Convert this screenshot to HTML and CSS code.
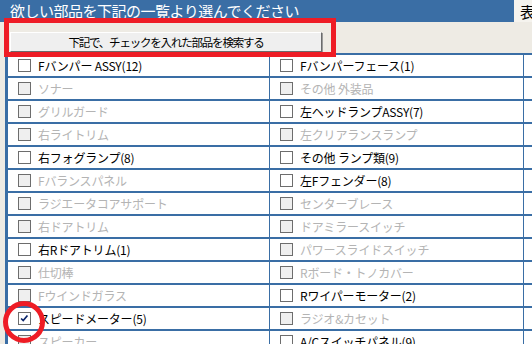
FILE: index.html
```html
<!DOCTYPE html>
<html lang="ja">
<head>
    <meta charset="UTF-8">
    <title>部品検索</title>
    <link rel="stylesheet" href="styles.css">
</head>
<body>
    <div class="header">
        <div class="header-title">欲しい部品を下記の一覧より選んでください</div>
        <div class="header-tab">表示</div>
    </div>

    <div class="toolbar">
        <button class="search-btn">下記で、チェックを入れた部品を検索する</button>
    </div>

    <table class="parts">
        <colgroup>
            <col class="col1">
            <col class="col2">
            <col class="col3">
        </colgroup>
        <tbody>
            <tr>
                <td class="c1"><label class="item"><span class="box"></span>Fバンパー ASSY(12)</label></td>
                <td class="c2"><label class="item"><span class="box"></span>Fバンパーフェース(1)</label></td>
                <td class="c3"></td>
            </tr>
            <tr>
                <td class="c1"><label class="item off"><span class="box"></span>ソナー</label></td>
                <td class="c2"><label class="item off"><span class="box"></span>その他 外装品</label></td>
                <td class="c3"></td>
            </tr>
            <tr>
                <td class="c1"><label class="item off"><span class="box"></span>グリルガード</label></td>
                <td class="c2"><label class="item"><span class="box"></span>左ヘッドランプASSY(7)</label></td>
                <td class="c3"></td>
            </tr>
            <tr>
                <td class="c1"><label class="item off"><span class="box"></span>右ライトリム</label></td>
                <td class="c2"><label class="item off"><span class="box"></span>左クリアランスランプ</label></td>
                <td class="c3"></td>
            </tr>
            <tr>
                <td class="c1"><label class="item"><span class="box"></span>右フォグランプ(8)</label></td>
                <td class="c2"><label class="item"><span class="box"></span>その他 ランプ類(9)</label></td>
                <td class="c3"></td>
            </tr>
            <tr>
                <td class="c1"><label class="item off"><span class="box"></span>Fバランスパネル</label></td>
                <td class="c2"><label class="item"><span class="box"></span>左Fフェンダー(8)</label></td>
                <td class="c3"></td>
            </tr>
            <tr>
                <td class="c1"><label class="item off"><span class="box"></span>ラジエータコアサポート</label></td>
                <td class="c2"><label class="item off"><span class="box"></span>センターブレース</label></td>
                <td class="c3"></td>
            </tr>
            <tr>
                <td class="c1"><label class="item off"><span class="box"></span>右ドアトリム</label></td>
                <td class="c2"><label class="item off"><span class="box"></span>ドアミラースイッチ</label></td>
                <td class="c3"></td>
            </tr>
            <tr>
                <td class="c1"><label class="item"><span class="box"></span>右Rドアトリム(1)</label></td>
                <td class="c2"><label class="item off"><span class="box"></span>パワースライドスイッチ</label></td>
                <td class="c3"></td>
            </tr>
            <tr>
                <td class="c1"><label class="item off"><span class="box"></span>仕切棒</label></td>
                <td class="c2"><label class="item off"><span class="box"></span>Rボード・トノカバー</label></td>
                <td class="c3"></td>
            </tr>
            <tr>
                <td class="c1"><label class="item off"><span class="box"></span>Fウインドガラス</label></td>
                <td class="c2"><label class="item"><span class="box"></span>Rワイパーモーター(2)</label></td>
                <td class="c3"></td>
            </tr>
            <tr>
                <td class="c1"><label class="item"><span class="box checked"><svg viewBox="0 0 13 13" width="11" height="11"><path d="M2.5 6.5 L5 9 L10 3" fill="none" stroke="#0a246a" stroke-width="2"/></svg></span>スピードメーター(5)</label></td>
                <td class="c2"><label class="item off"><span class="box"></span>ラジオ&amp;カセット</label></td>
                <td class="c3"></td>
            </tr>
            <tr>
                <td class="c1"><label class="item off"><span class="box"></span>スピーカー</label></td>
                <td class="c2"><label class="item"><span class="box"></span>A/Cスイッチパネル(9)</label></td>
                <td class="c3"></td>
            </tr>
        </tbody>
    </table>

    <div class="mark-box"></div>
    <div class="mark-circle"></div>
</body>
</html>
```

FILE: styles.css
```css
body {
    margin: 0;
    width: 532px;
    height: 344px;
    overflow: hidden;
    position: relative;
    background-color: #eeebe4;
    font-family: "Noto Sans CJK JP", "DejaVu Sans", sans-serif;
}

.header {
    display: flex;
    height: 22px;
}

.header-title {
    width: 504px;
    flex-shrink: 0;
    padding-left: 10px;
    background-color: #3a6ea5;
    color: #ffffff;
    font-size: 15px;
    letter-spacing: -0.5px;
    line-height: 22px;
    white-space: nowrap;
}

.header-tab {
    flex: 1;
    padding-left: 6px;
    background-color: #f5f3ee;
    color: #000000;
    font-size: 15px;
    line-height: 24px;
    white-space: nowrap;
    overflow: hidden;
}

.toolbar {
    height: 31px;
    padding: 6px 0 0 10px;
    box-sizing: border-box;
}

.search-btn {
    width: 312px;
    height: 20px;
    padding: 0;
    background-color: #efefef;
    border: 1px solid;
    border-color: #ffffff #6b6b6b #6b6b6b #ffffff;
    box-shadow: 1px 1px 0 #9a9a9a;
    font-family: inherit;
    font-size: 11.5px;
    letter-spacing: -1.2px;
    color: #000000;
    line-height: 18px;
}

.parts {
    margin-left: 5px;
    width: 527px;
    table-layout: fixed;
    border-spacing: 0;
    border-top: 2px solid #3a6ea5;
    border-left: 3px solid #3a6ea5;
    background-color: #ffffff;
}

.col1 { width: 262px; }
.col2 { width: 254px; }

.parts td {
    height: 21px;
    padding: 0;
    border-bottom: 2px solid #3a6ea5;
    white-space: nowrap;
    overflow: hidden;
}

.parts td.c1, .parts td.c2 {
    border-right: 1px solid #3a6ea5;
}

.item {
    display: flex;
    align-items: center;
    gap: 7px;
    padding-left: 10px;
    font-size: 12px;
    letter-spacing: -0.2px;
    color: #000000;
}

.item.off {
    color: #b4b4b4;
}

.box {
    width: 11px;
    height: 11px;
    border: 1px solid #6d6d6d;
    background-color: #ffffff;
    flex-shrink: 0;
    display: flex;
    align-items: center;
    justify-content: center;
}

.item.off .box {
    background-color: #efefef;
}

.mark-box {
    position: absolute;
    left: 4px;
    top: 18px;
    width: 322px;
    height: 29px;
    border: 5px solid #ee1c25;
}

.mark-circle {
    position: absolute;
    left: 3px;
    top: 301px;
    width: 32px;
    height: 32px;
    border: 5px solid #ee1c25;
    border-radius: 50%;
}
```
